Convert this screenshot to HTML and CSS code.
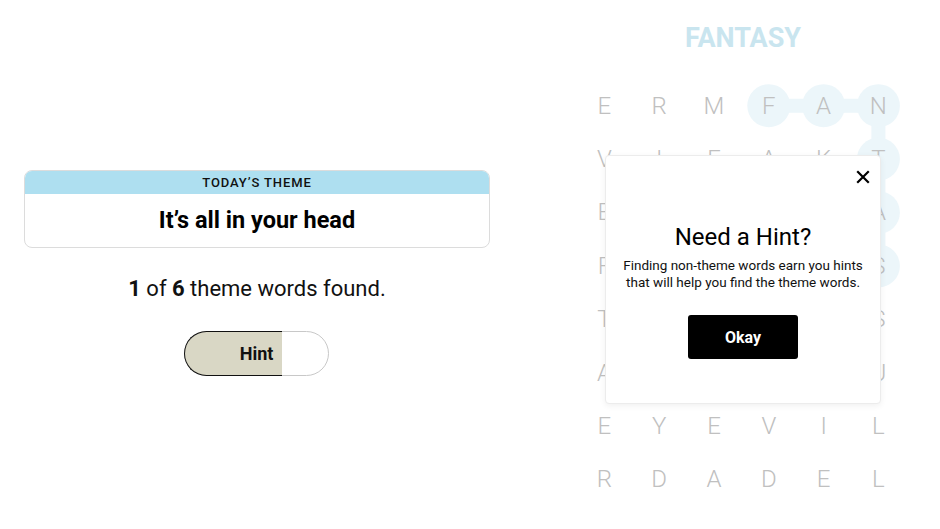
FILE: index.html
```html
<!DOCTYPE html>
<html lang="en">
<head>
<meta charset="utf-8">
<title>Strands</title>
<link rel="stylesheet" href="styles.css">
</head>
<body>
<div class="page">
  <section class="left">
    <div class="theme-card">
      <div class="theme-head">TODAY’S THEME</div>
      <div class="theme-body">It’s all in your head</div>
    </div>
    <p class="found"><b>1</b> of <b>6</b> theme words found.</p>
    <button class="hint"><span class="hint-fill"></span><span class="hint-label">Hint</span></button>
  </section>
  <section class="right">
    <h2 class="word">FANTASY</h2>
    <div class="board">
      <svg class="trail" width="329" height="428" viewBox="0 0 329 428">
        <g stroke="#ecf6fa" stroke-width="14" stroke-linecap="round" fill="none">
          <polyline points="191.8,26.7 301.4,26.7 301.4,186.9"/>
          <line x1="301.4" y1="186.9" x2="246.6" y2="240.3"/>
        </g>
        <g fill="#ecf6fa">
          <circle cx="191.8" cy="26.7" r="21.5"/>
          <circle cx="246.6" cy="26.7" r="21.5"/>
          <circle cx="301.4" cy="26.7" r="21.5"/>
          <circle cx="301.4" cy="80.1" r="21.5"/>
          <circle cx="301.4" cy="133.5" r="21.5"/>
          <circle cx="301.4" cy="186.9" r="21.5"/>
          <circle cx="246.6" cy="240.3" r="21.5"/>
        </g>
      </svg>
      <div class="grid">
        <span>E</span><span>R</span><span>M</span><span>F</span><span>A</span><span>N</span>
        <span>V</span><span>I</span><span>E</span><span>A</span><span>K</span><span>T</span>
        <span>E</span><span class="under">N</span><span class="under">O</span><span class="under">R</span><span class="under">I</span><span>A</span>
        <span>F</span><span class="under">I</span><span class="under">M</span><span class="under">D</span><span class="under">G</span><span>S</span>
        <span>T</span><span class="under">A</span><span class="under">G</span><span class="under">N</span><span class="under">Y</span><span>S</span>
        <span>A</span><span class="under">M</span><span class="under">I</span><span class="under">O</span><span class="under">N</span><span>U</span>
        <span>E</span><span>Y</span><span>E</span><span>V</span><span>I</span><span>L</span>
        <span>R</span><span>D</span><span>A</span><span>D</span><span>E</span><span>L</span>
      </div>
      <div class="modal">
        <button class="close" aria-label="Close">
          <svg width="14" height="14" viewBox="0 0 14 14"><path d="M2 2 L12 12 M12 2 L2 12" stroke="#000" stroke-width="2.2" stroke-linecap="square"/></svg>
        </button>
        <h3 class="modal-title">Need a Hint?</h3>
        <p class="modal-text">Finding non-theme words earn you hints that will help you find the theme words.</p>
        <button class="okay">Okay</button>
      </div>
    </div>
  </section>
</div>
</body>
</html>
```

FILE: styles.css
```css
* { box-sizing: border-box; }
html, body {
  margin: 0;
  padding: 0;
  background: #fff;
  font-family: "Liberation Sans", Arial, sans-serif;
  color: #000;
}
.page {
  display: flex;
  width: 940px;
  height: 529px;
  overflow: hidden;
}
.left {
  width: 577px;
  padding: 170px 0 0 24px;
}
.theme-card {
  width: 466px;
  border: 1px solid #dcdcdc;
  border-radius: 8px;
  overflow: hidden;
}
.theme-head {
  height: 23px;
  background: #aedff0;
  text-align: center;
  font-family: "Roboto", "Liberation Sans", sans-serif;
  font-weight: 500;
  font-size: 13px;
  line-height: 23px;
  letter-spacing: 0.9px;
  color: #111;
}
.theme-body {
  height: 53px;
  text-align: center;
  font-family: "Roboto", "Liberation Sans", sans-serif;
  font-weight: 700;
  font-size: 23.5px;
  line-height: 53px;
  color: #000;
}
.found {
  width: 466px;
  margin: 26px 0 0 0;
  text-align: center;
  font-family: "Roboto", "Liberation Sans", sans-serif;
  font-size: 22px;
  line-height: 30px;
  color: #111;
}
.found b { font-weight: 700; }
.hint {
  position: relative;
  display: block;
  width: 145px;
  height: 45px;
  margin: 27px 0 0 160px;
  padding: 0;
  border: 1px solid #c8c8c8;
  border-radius: 23px;
  background: #fff;
  font-family: "Roboto", "Liberation Sans", sans-serif;
}
.hint-fill {
  position: absolute;
  top: -1px;
  left: -1px;
  bottom: -1px;
  width: 98px;
  border: 1.5px solid #111;
  border-right: none;
  border-radius: 23px 0 0 23px;
  background: #d9d7c5;
}
.hint-label {
  position: relative;
  font-weight: 700;
  font-size: 18px;
  color: #111;
}
.right {
  width: 363px;
  display: flex;
  flex-direction: column;
}
.word {
  width: 329px;
  margin: 20px 0 0 0;
  height: 59px;
  padding-left: 3px;
  text-align: center;
  font-family: "Roboto", "Liberation Sans", sans-serif;
  font-weight: 700;
  font-size: 27px;
  line-height: 36px;
  color: #c9e5ef;
}
.board {
  position: relative;
  width: 329px;
  height: 428px;
}
.trail {
  position: absolute;
  left: 0;
  top: 0;
}
.grid {
  position: relative;
  display: grid;
  grid-template-columns: repeat(6, 54.8px);
  grid-template-rows: repeat(8, 53.4px);
}
.grid span {
  display: flex;
  align-items: center;
  justify-content: center;
  font-family: "Roboto", "Liberation Sans", sans-serif;
  font-weight: 300;
  font-size: 24px;
  color: #c0c0c0;
}
.grid span.under { visibility: hidden; }
.modal {
  position: absolute;
  left: 28px;
  top: 76px;
  width: 276px;
  height: 249px;
  background: #fff;
  border: 1px solid #ececec;
  border-radius: 4px;
  box-shadow: 0 2px 6px rgba(0,0,0,0.06);
  display: flex;
  flex-direction: column;
  align-items: center;
  padding-top: 66px;
}
.close {
  position: absolute;
  top: 13px;
  right: 9px;
  width: 16px;
  height: 16px;
  padding: 0;
  border: none;
  background: none;
  display: flex;
  align-items: center;
  justify-content: center;
}
.modal-title {
  margin: 0;
  font-family: "Roboto", "Liberation Sans", sans-serif;
  font-weight: 400;
  font-size: 24px;
  line-height: 30px;
  color: #000;
}
.modal-text {
  margin: 5px 0 0 0;
  width: 250px;
  text-align: center;
  font-family: "Roboto", "Liberation Sans", sans-serif;
  font-size: 13.5px;
  line-height: 17px;
  color: #111;
}
.okay {
  margin-top: 24px;
  width: 110px;
  height: 44px;
  border: none;
  border-radius: 3px;
  background: #000;
  color: #fff;
  font-family: "Roboto", "Liberation Sans", sans-serif;
  font-weight: 700;
  font-size: 16px;
}
```
